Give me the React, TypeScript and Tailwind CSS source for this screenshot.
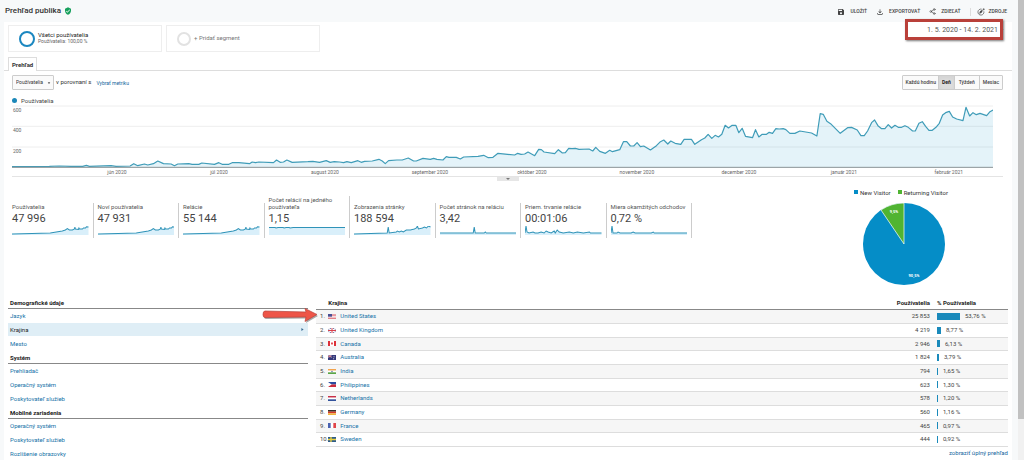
import React from "react";
import { MdArrowDropDown, MdOutlineFileDownload, MdSave, MdVerifiedUser } from "react-icons/md";
import { Share2 } from "lucide-react";

type Point = [number, number];

const lineData: Point[] = [
  [38, 215], [150, 214], [180, 213], [215, 214], [250, 214], [261, 211], [270, 214], [335, 212], [350, 214], [392, 213],
  [403, 206], [415, 212], [435, 207], [445, 210], [462, 206], [475, 198], [492, 206], [515, 207], [525, 212], [535, 207],
  [568, 206], [578, 208], [598, 208], [607, 204], [645, 208], [658, 203], [668, 208], [688, 208], [698, 203], [718, 203],
  [750, 206], [758, 201], [768, 203], [778, 201], [822, 203], [831, 195], [842, 202], [852, 201], [862, 195], [878, 202],
  [925, 200], [940, 199], [960, 202], [980, 197], [992, 202], [1004, 200], [1020, 201], [1032, 203], [1042, 200],
  [1055, 203], [1075, 197], [1085, 202], [1095, 199], [1118, 198], [1138, 193], [1148, 198], [1157, 206], [1167, 197],
  [1192, 195], [1208, 195], [1226, 189], [1242, 198], [1250, 198], [1270, 190], [1292, 193], [1302, 190], [1312, 193],
  [1330, 195], [1340, 185], [1348, 187], [1370, 187], [1382, 192], [1392, 186], [1435, 184], [1452, 181], [1466, 188],
  [1480, 187], [1495, 175], [1545, 180], [1554, 175], [1564, 178], [1575, 177], [1585, 171], [1605, 182], [1617, 163],
  [1625, 164], [1633, 171], [1665, 176], [1676, 164], [1688, 174], [1697, 173], [1707, 160], [1717, 161], [1727, 160],
  [1738, 163], [1768, 162], [1779, 168], [1788, 157], [1800, 169], [1817, 175], [1830, 166], [1838, 170], [1860, 164],
  [1871, 140], [1881, 140], [1892, 153], [1902, 153], [1912, 143], [1922, 155], [1932, 153], [1952, 165], [1970, 152],
  [1982, 140], [1992, 135], [2004, 147], [2013, 138], [2026, 145], [2043, 148], [2053, 133], [2075, 133], [2085, 148],
  [2105, 134], [2115, 129], [2125, 118], [2136, 130], [2146, 121], [2156, 126], [2166, 118], [2176, 91], [2186, 99],
  [2197, 91], [2208, 91], [2217, 113], [2227, 100], [2237, 124], [2258, 128], [2267, 104], [2277, 126], [2287, 118],
  [2300, 118], [2308, 112], [2318, 115], [2328, 101], [2338, 102], [2350, 101], [2358, 104], [2370, 115], [2385, 115],
  [2400, 108], [2435, 114], [2451, 123], [2461, 56], [2470, 58], [2481, 79], [2492, 86], [2521, 115], [2543, 98],
  [2555, 97], [2572, 105], [2583, 122], [2593, 122], [2603, 108], [2615, 83], [2624, 75], [2634, 92], [2645, 101],
  [2655, 101], [2665, 89], [2675, 99], [2685, 91], [2695, 97], [2705, 97], [2715, 92], [2725, 97], [2738, 108],
  [2746, 108], [2757, 85], [2767, 80], [2777, 94], [2787, 106], [2797, 106], [2808, 97], [2818, 85], [2828, 60],
  [2837, 53], [2848, 49], [2858, 66], [2870, 72], [2889, 77], [2898, 37], [2909, 63], [2919, 53], [2929, 59],
  [2940, 55], [2960, 62], [2970, 50], [2979, 45],
];

const months = [
  { name: "jún 2020", day: 107 },
  { name: "júl 2020", day: 211 },
  { name: "august 2020", day: 319 },
  { name: "september 2020", day: 426 },
  { name: "október 2020", day: 530 },
  { name: "november 2020", day: 637 },
  { name: "december 2020", day: 741 },
  { name: "január 2021", day: 848 },
  { name: "február 2021", day: 955 },
];

const growth =
  "0,8 20,7.500 38,7 44,6 50,5 53,4 55,2.500 57,4 60,4 62,3 62.500,1 63,3 66,3.500 66.500,2 67,3 70,3 71,2 73,2 74,0.800 76,1";
const flat = "0,1.500 6,1.500 7,2 9,1.500 14,1.500 15,2 17,1.500 20,1.500 21,2 24,1.500 76,1.500";
const views =
  "0,8 33,7 34,1 35,7 42,6 43,5 45,6 47,5 49,6 52,4 56,4 60,3 62,2 63,0 64,3 68,2 70,1 72,2 74,0 76,1";
const pages = "0,7 33,7 34,1 35,7 44,7 45,6 46,7 76,7";
const duration =
  "0,7 1,0 2,6 4,7 8,6 10,7 13,7 16,6 19,7 21,5 23,6 26,7 29,5 30,7 32,4 34,6 38,7 44,6 48,7 52,6 58,7 64,6 65,7 76,7";
const exits = "0,7 1,0 2,7 6,7 7,6 9,7 20,7 22,6 24,7 40,7 42,6 43,7 60,7 76,7";

const metrics = [
  { label: "Používatelia", value: "47 996", spark: growth },
  { label: "Noví používatelia", value: "47 931", spark: growth },
  { label: "Relácie", value: "55 144", spark: growth },
  { label: "Počet relácií na jedného používateľa", value: "1,15", spark: flat },
  { label: "Zobrazenia stránky", value: "188 594", spark: views },
  { label: "Počet stránok na reláciu", value: "3,42", spark: pages },
  { label: "Priem. trvanie relácie", value: "00:01:06", spark: duration },
  { label: "Miera okamžitých odchodov", value: "0,72 %", spark: exits },
];

const menu = [
  { title: "Demografické údaje", items: ["Jazyk", "Krajina", "Mesto"] },
  { title: "Systém", items: ["Prehliadač", "Operačný systém", "Poskytovateľ služieb"] },
  { title: "Mobilné zariadenia", items: ["Operačný systém", "Poskytovateľ služieb", "Rozlíšenie obrazovky"] },
];

const countries = [
  { code: "us", name: "United States", users: "25 853", share: 53.76, text: "53,76 %" },
  { code: "gb", name: "United Kingdom", users: "4 219", share: 8.77, text: "8,77 %" },
  { code: "ca", name: "Canada", users: "2 946", share: 6.13, text: "6,13 %" },
  { code: "au", name: "Australia", users: "1 824", share: 3.79, text: "3,79 %" },
  { code: "in", name: "India", users: "794", share: 1.65, text: "1,65 %" },
  { code: "ph", name: "Philippines", users: "623", share: 1.3, text: "1,30 %" },
  { code: "nl", name: "Netherlands", users: "578", share: 1.2, text: "1,20 %" },
  { code: "de", name: "Germany", users: "560", share: 1.16, text: "1,16 %" },
  { code: "fr", name: "France", users: "465", share: 0.97, text: "0,97 %" },
  { code: "se", name: "Sweden", users: "444", share: 0.92, text: "0,92 %" },
];

function stripes(colors: string[]) {
  const h = 15 / colors.length;
  return colors.map((c, i) => <rect key={i} y={i * h} width="24" height={h} fill={c} />);
}

const flags: Record<string, React.ReactNode> = {
  us: (
    <>
      {stripes(["#d8505c", "#fff", "#d8505c", "#fff", "#d8505c", "#fff", "#d8505c"])}
      <rect width="12" height="8" fill="#4a4f94" />
    </>
  ),
  gb: (
    <>
      <rect width="24" height="15" fill="#5a6099" />
      <path d="M0 0L24 15M24 0L0 15" stroke="#fff" strokeWidth="4" />
      <path d="M12 0V15M0 7.5H24" stroke="#fff" strokeWidth="6" />
      <path d="M12 0V15M0 7.5H24" stroke="#d8404c" strokeWidth="3" />
    </>
  ),
  ca: (
    <>
      <rect width="24" height="15" fill="#fff" />
      <path d="M0 0H6V15H0ZM18 0H24V15H18ZM12 3L15 7L13 11H11L9 7Z" fill="#dd3038" />
    </>
  ),
  au: (
    <>
      <rect width="24" height="15" fill="#34387a" />
      <path d="M0 0L11 7M11 0L0 7" stroke="#fff" strokeWidth="2" />
      <path d="M5.500 0V8M0 4H11" stroke="#d8707c" strokeWidth="2" />
      <circle cx="18" cy="5" r="1.500" fill="#fff" />
      <circle cx="17" cy="11" r="1.500" fill="#fff" />
    </>
  ),
  in: (
    <>
      {stripes(["#f2a44e", "#fff", "#5ba548"])}
      <circle cx="12" cy="7.500" r="2" fill="#5060a0" />
    </>
  ),
  ph: (
    <>
      {stripes(["#2c4ca0", "#cc2a3c"])}
      <path d="M0 0L11 7.500L0 15Z" fill="#fff" />
    </>
  ),
  nl: stripes(["#c83048", "#fff", "#32529c"]),
  de: stripes(["#3a3028", "#d83a28", "#f0b43c"]),
  fr: (
    <>
      <rect width="24" height="15" fill="#fff" />
      <rect width="8" height="15" fill="#4a62b0" />
      <rect x="16" width="8" height="15" fill="#e04448" />
    </>
  ),
  se: (
    <>
      <rect width="24" height="15" fill="#2d5c8c" />
      <path d="M9 0V15M0 7.500H24" stroke="#e8d040" strokeWidth="4" />
    </>
  ),
};

function Header() {
  const action = "flex items-center gap-[5px]";
  return (
    <header className="flex h-[22px] items-center justify-between pr-[7px] pl-[5px]">
      <h1 className="flex items-center gap-[3px] text-[8px] font-medium text-[#333]">
        Prehľad publika
        <MdVerifiedUser className="size-2 text-[#16a05c]" />
      </h1>
      <div className="flex items-center gap-[9px] pt-px text-[5px] font-medium text-[#444]">
        <button className={action}>
          <MdSave className="size-2" />
          ULOŽIŤ
        </button>
        <button className={action}>
          <MdOutlineFileDownload className="size-2" />
          EXPORTOVAŤ
        </button>
        <button className={action}>
          <Share2 className="size-[7px]" />
          ZDIEĽAŤ
        </button>
        <button className="flex items-center gap-1 border-l border-[#ddd] pl-[6px]">
          <svg viewBox="0 0 24 24" className="size-2" fill="none" stroke="currentColor" strokeWidth="2">
            <path d="M14 3.500A9 9 0 1 0 20.500 10" />
            <path d="M8 16L10 10L16 7L14 13Z" fill="currentColor" />
            <path d="M20 1V7M17 4H23" />
          </svg>
          ZDROJE
        </button>
      </div>
    </header>
  );
}

function Segments() {
  const card = "flex h-[27px] w-[154px] items-center border border-[#eee] pl-[10px] text-left text-[6px] leading-[7px]";
  return (
    <div className="flex items-start justify-between px-1 pt-[3px]">
      <div className="flex gap-1">
        <button className={card + " gap-[3px]"}>
          <span className="size-4 rounded-full border-2 border-[#1b87c0]" />
          <span className="pb-px">
            <span className="block text-[#222]">Všetci používatelia</span>
            <span className="block text-[5px] text-[#666]">Používatelia: 100,00 %</span>
          </span>
        </button>
        <button className={card + " gap-[3px] text-[#777]"}>
          <span className="size-[14px] rounded-full border-2 border-[#e2e2e2]" />
          <span className="pb-[3px]">+ Pridať segment</span>
        </button>
      </div>
      <button className="relative flex items-center pr-[2px] text-[7px] leading-[10px] text-[#555]">
        1. 5. 2020 - 14. 2. 2021
        <MdArrowDropDown className="size-2" />
        <span className="absolute -top-[6px] right-[5px] h-[21px] w-[98px] border-[3px] border-[#b9403a] shadow-[1px_1px_2px_#777]" />
      </button>
    </div>
  );
}

function Controls() {
  return (
    <div className="flex items-center justify-between px-2 pt-1 pr-[9px]">
      <div className="flex items-center">
        <label className="relative flex items-center">
          <select
            aria-label="Metrika"
            className="h-[15px] w-[42px] appearance-none rounded-[1px] border border-[#ccc] bg-[#fafafa] pl-[3px] text-[5px] text-[#333]"
          >
            <option>Používatelia</option>
          </select>
          <MdArrowDropDown className="pointer-events-none absolute right-[2px] size-[6px]" />
        </label>
        <span className="pb-[2px] pl-[2px] text-[6px] leading-[8px] text-[#333]">v porovnaní s</span>
        <a href="#metrika" className="pl-[5px] text-[5px] leading-[8px] text-[#15669c]">
          Vybrať metriku
        </a>
      </div>
      <div className="flex h-[15px] divide-x divide-[#ccc] rounded-[1px] border border-[#ccc] bg-[#fafafa] text-[5px] font-medium text-[#444]">
        <button className="px-[2px]">Každú hodinu</button>
        <button className="bg-[#ddd] px-[3px] font-bold text-[#222] shadow-inner">Deň</button>
        <button className="px-1">Týždeň</button>
        <button className="px-[3px]">Mesiac</button>
      </div>
    </div>
  );
}

function Chart() {
  const line = lineData.map((p) => p.join(",")).join(" ");
  return (
    <div className="px-2 pt-[6px] pr-[9px]">
      <div className="flex h-2 items-center gap-1 text-[6px] text-[#444]">
        <span className="size-[5px] rounded-full bg-[#1b87b8]" />
        Používatelia
      </div>
      <div className="pt-px pr-[10px]">
        <div className="relative">
          <svg viewBox="38 30 2941 189" preserveAspectRatio="none" className="h-[63px] w-full">
            <path d="M38 33H2979M38 94H2979M38 156H2979" stroke="#eee" vectorEffect="non-scaling-stroke" />
            <polygon points={`38,217 ${line} 2979,217`} fill="#0590c8" fillOpacity="0.110" />
            <polyline
              points={line}
              fill="none"
              stroke="#3f9cb8"
              strokeWidth="1.200"
              strokeLinejoin="round"
              vectorEffect="non-scaling-stroke"
            />
            <path d="M38 217H2979" stroke="#8a9296" vectorEffect="non-scaling-stroke" />
          </svg>
          <div className="absolute inset-x-0 top-[1px] flex flex-col pl-px text-[5px] text-[#666]">
            <span className="h-5 leading-[8px]">600</span>
            <span className="h-[21px] leading-[9px]">400</span>
            <span className="h-5 leading-[9px]">200</span>
          </div>
        </div>
        <div className="relative h-2 text-[5px] leading-[9px] text-[#666]">
          {months.map((m) => (
            <span
              key={m.name}
              className="absolute -translate-x-1/2 whitespace-nowrap"
              style={{ left: `${m.day / 10}%` }}
            >
              {m.name}
            </span>
          ))}
        </div>
      </div>
      <div className="flex h-[5px] justify-center border-t border-[#e4e4e4]">
        <span className="flex h-1 w-[22px] items-center justify-center bg-[#e6e6e6]">
          <svg viewBox="0 0 4 2" className="h-[2px] w-1 fill-[#777]">
            <path d="M0 0H4L2 2Z" />
          </svg>
        </span>
      </div>
    </div>
  );
}

function Metrics() {
  return (
    <div className="grid w-[684px] grid-cols-8 items-end pt-[15px]">
      {metrics.map((m) => (
        <div key={m.label} className="border-r border-[#ccc] pr-1 pb-[3px] pl-1">
          <div className="-mr-1 text-[6px] leading-[7px] text-[#555]">{m.label}</div>
          <div className="pt-[2px] text-[11px] leading-[13px] text-[#444]">{m.value}</div>
          <svg viewBox="0 0 76 9" preserveAspectRatio="none" className="mt-px h-[9px] w-full">
            <polygon points={`0,9 ${m.spark} 76,9`} fill="#d9effa" />
            <polyline points={m.spark} fill="none" stroke="#2f93b8" strokeWidth="1" />
          </svg>
        </div>
      ))}
    </div>
  );
}

function Visitors() {
  return (
    <div className="flex w-[208px] flex-col items-center pt-[7px]">
      <div className="flex h-2 items-center gap-[7px] pr-[6px] text-[6px] text-[#333]">
        <span className="flex items-center gap-[2px]">
          <span className="size-1 bg-[#058dc7]" />
          New Visitor
        </span>
        <span className="flex items-center gap-[2px]">
          <span className="size-1 bg-[#50b432]" />
          Returning Visitor
        </span>
      </div>
      <svg viewBox="0 0 82 82" className="mt-[7px] size-[82px]">
        <circle cx="41" cy="41" r="41" fill="#058dc7" />
        <path d="M41 41V0A41 41 0 0 0 18 7Z" fill="#50b432" stroke="#fff" strokeWidth="0.700" />
        <text x="31" y="10" fill="#fff" textAnchor="middle" className="text-[4px] font-bold">
          9,5%
        </text>
        <text x="51" y="74" fill="#fff" textAnchor="middle" className="text-[4px] font-bold">
          90,5%
        </text>
      </svg>
    </div>
  );
}

function Menu() {
  return (
    <nav className="relative w-[30%] shrink-0 text-[6px]">
      {menu.map((section) => (
        <div key={section.title} className="grid h-[55px] grid-rows-4">
          <h2 className="flex items-center border-b border-[#888] pt-[2px] pl-[2px] font-bold text-[#222]">
            {section.title}
          </h2>
          {section.items.map((item) =>
            item === "Krajina" ? (
              <a key={item} href="#krajina" className="flex items-center justify-between bg-[#dfeef6] pr-1 pl-[2px] text-[#222]">
                {item}
                <svg viewBox="0 0 3 4" className="h-[3px] w-[3px] fill-[#3c6e96]">
                  <path d="M0 0L3 2L0 4Z" />
                </svg>
              </a>
            ) : (
              <a key={item} href="#prehlad" className="flex items-center pl-[2px] text-[#1572a8]">
                {item}
              </a>
            ),
          )}
        </div>
      ))}
      <svg viewBox="0 0 56 18" className="absolute top-3 -right-[10px] h-[18px] w-14 overflow-visible">
        <g fill="#555" opacity="0.500" transform="translate(1 1)">
          <path d="M3 5Q1 5 1 8Q1 11 3 11L44 10.500L43 15L55 8L43 2L44 5.500Z" />
        </g>
        <path
          d="M3 4Q1 4 1 7.500Q1 10.500 3 10.500L44 10L43 14.500L55 7.500L43 1.500L44 5Z"
          fill="#ee5548"
          stroke="#b8443c"
          strokeWidth="0.700"
        />
      </svg>
    </nav>
  );
}

function Countries() {
  return (
    <div className="flex min-w-0 flex-1 flex-col">
      <table className="w-full border-collapse text-[6px] leading-[8px] text-[#444]">
        <thead>
          <tr className="h-[14px] border-b border-[#888] text-[#222]">
            <th className="w-3 p-0" />
            <th className="p-0 pt-[2px] text-left">Krajina</th>
            <th className="p-0 pt-[2px] text-right">Používatelia</th>
            <th className="w-[78px] p-0 pt-[2px] pl-[7px] text-left">% Používatelia</th>
          </tr>
        </thead>
        <tbody className="[&>tr]:h-[14px] [&>tr:nth-child(3n)]:h-[13px]">
          {countries.map((c, i) => (
            <tr key={c.code} className="border-b border-[#ddd] odd:bg-[#f6f6f6]">
              <td className="p-0 pl-1 whitespace-nowrap">{i + 1}.</td>
              <td className="p-0">
                <a href="#krajina" className="flex items-center gap-1 text-[#1572a8]">
                  <svg viewBox="0 0 24 15" className="h-[5px] w-2" preserveAspectRatio="none">
                    {flags[c.code]}
                  </svg>
                  {c.name}
                </a>
              </td>
              <td className="p-0 text-right">{c.users}</td>
              <td className="p-0 pl-[7px]">
                <span className="flex items-center gap-[5px]">
                  <span
                    className="h-[7px] min-w-px bg-[#1a8abb]"
                    style={{ width: `${Math.max(1, Math.round(c.share * 0.43))}px` }}
                  />
                  {c.text}
                </span>
              </td>
            </tr>
          ))}
        </tbody>
      </table>
      <a href="#uplny-prehlad" className="self-end pt-[2px] text-[6px] leading-[8px] text-[#1565a0]">
        zobraziť úplný prehľad
      </a>
    </div>
  );
}

export default function App() {
  return (
    <div className="flex min-h-screen bg-[#f7f9fa] font-[Roboto,sans-serif]">
      <div className="min-w-0 flex-1 pr-1">
        <Header />
        <main className="mr-[2px] ml-1 bg-white">
          <Segments />
          <div className="mt-[5px] flex border-b border-[#ddd] pl-1">
            <button className="-mb-px h-[14px] border border-b-0 border-[#ddd] bg-white px-[3px] text-[6px] font-bold text-[#333]">
              Prehľad
            </button>
          </div>
          <Controls />
          <Chart />
          <div className="flex h-[114px] items-start justify-between px-1">
            <Metrics />
            <Visitors />
          </div>
          <div className="flex gap-2 px-1">
            <Menu />
            <Countries />
          </div>
        </main>
      </div>
      <div className="w-[6px] bg-[#f1f1f1]">
        <div className="h-[91%] bg-[#c1c1c1]" />
      </div>
    </div>
  );
}
